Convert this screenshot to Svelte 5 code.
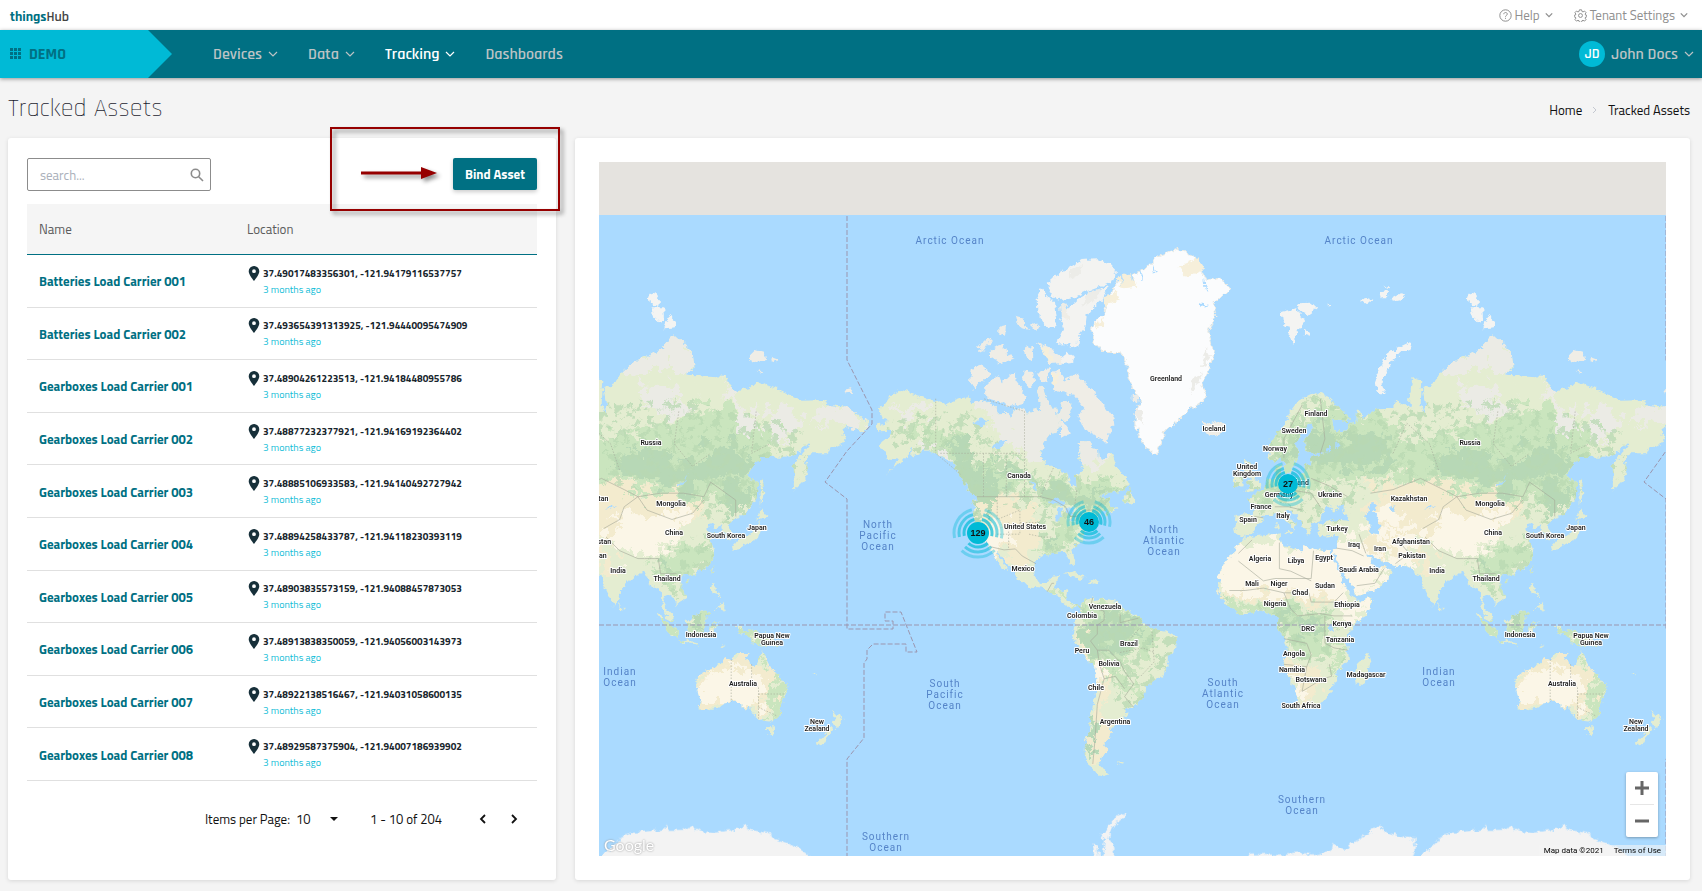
<script lang="ts">
  const WORLD = 819;

  const assets = [
    ['Batteries Load Carrier 001', '37.49017483356301, -121.94179116537757'],
    ['Batteries Load Carrier 002', '37.493654391313925, -121.94440095474909'],
    ['Gearboxes Load Carrier 001', '37.48904261223513, -121.94184480955786'],
    ['Gearboxes Load Carrier 002', '37.48877232377921, -121.94169192364402'],
    ['Gearboxes Load Carrier 003', '37.48885106933583, -121.94140492727942'],
    ['Gearboxes Load Carrier 004', '37.48894258433787, -121.94118230393119'],
    ['Gearboxes Load Carrier 005', '37.48903835573159, -121.94088457873053'],
    ['Gearboxes Load Carrier 006', '37.48913838350059, -121.94056003143973'],
    ['Gearboxes Load Carrier 007', '37.48922138516467, -121.94031058600135'],
    ['Gearboxes Load Carrier 008', '37.48929587375904, -121.94007186939902'],
  ];

  let search = $state('');
  let perPage = $state('10');

  // web mercator, lon/lat pairs to map pixels
  function project(pair: string) {
    const [lon, lat] = pair.split(',').map(Number);
    const x = 248 + (lon + 180) * 2.2756;
    const y = 463 - 130.4 * Math.log(Math.tan(Math.PI / 4 + (lat * Math.PI) / 360));
    return `${x.toFixed(1)} ${y.toFixed(1)}`;
  }

  const line = (s: string) => 'M' + s.split(' ').map(project).join('L');
  const area = (s: string) => line(s) + 'Z';

  const coasts = [
    // north america
    '-168,65.6 -162,66.2 -164,66.6 -166,68.3 -163,69.3 -161,70.4 -156.6,71.3 -152,70.9 -146,70.2 -141,69.6 -136,69 -133,69.6 -129,70.1 -127,70.2 -125,69.5 -121,69.8 -116,69 -114,68.2 -115,67.8 -109,67.9 -108,66.8 -106,68.7 -101,67.8 -98,67.8 -97.5,68.5 -95,68.2 -95.5,69.8 -96.5,71.2 -94.5,72 -92.5,71.2 -91.5,69.6 -90,68.6 -88,68.6 -87.5,67.3 -86.5,67.4 -85.5,69.5 -82.5,69.7 -81.3,68.8 -82,68 -81.3,67.2 -84,66.4 -86.7,66.4 -86,65.8 -88,64.2 -90.5,64 -93,62.5 -94.3,60.5 -94.8,58.8 -92.8,58.5 -92.5,57 -90,57.2 -85,55.3 -82.3,55.1 -82.3,53 -81,51.9 -79,51.3 -79.5,54.7 -77,55.8 -76.5,57.5 -78.5,58.9 -77.3,60 -78.2,62.4 -74,62.3 -71.5,61.3 -69.7,61 -69.5,59 -67.8,58.4 -66,58.9 -64.6,60.3 -62.5,58.2 -61.5,56.5 -58,54.8 -55.8,53 -57,51.5 -60,50.2 -66.5,50.2 -69.5,48.2 -65,49.2 -64.5,48 -65,46.8 -64,46 -61,45.3 -64,44.3 -66,43.6 -65.5,45.3 -67,44.8 -70,43.8 -70.8,42.5 -70,41.7 -74,40.6 -74.2,39.5 -75.5,38 -76.3,36.9 -75.6,35.2 -78,33.9 -81,32 -81.4,30.5 -80.1,27 -80.4,25.3 -81.8,26 -82.8,28 -84,30 -86,30.3 -89.5,30.2 -90,29.1 -94,29.6 -97.2,27.8 -97.7,24 -97.6,22 -96.3,19.2 -94.5,18.2 -92,18.6 -90.7,19.5 -90.3,21 -87,21.5 -87.5,19 -88.3,17 -88.8,15.9 -83.2,15 -83.7,11.5 -81.8,9 -79.5,9.5 -77.3,8.6 -77.8,7.3 -78.5,8.8 -80.3,7.4 -82.8,8.2 -85.7,10 -87.5,12.9 -91.5,14 -94.5,16.2 -99,16.6 -105,19.5 -105.5,21.8 -108.8,25.5 -112.5,29.5 -114.7,31.7 -113,28.5 -110.3,25 -109.5,23 -112,24.7 -114.7,27.8 -115.8,30 -117.2,32.6 -118.5,34 -120.6,34.6 -122.3,37 -124.3,40.3 -124,44 -124.6,48.3 -122.5,47.5 -123,49.2 -127,51 -130,54.5 -133.5,58 -137,58.8 -140,59.8 -146,60.7 -148,60 -151.5,59.2 -151,61 -154,59.3 -158,57 -163,55 -164.5,54.6 -160,56 -157.5,58.6 -162,58.8 -165,61 -166,62 -161,63.7 -161,64.6 -166,64.5',
    // south america
    '-77.3,8.6 -75.5,10.6 -71.7,12.4 -71.5,10.8 -68,11.5 -62,10.7 -60,8.5 -57,6 -51.5,4.3 -50,0.5 -48,-0.7 -44,-2.5 -40,-2.9 -35.3,-5.3 -34.8,-8 -37,-11.5 -39,-14 -39.2,-18 -41,-22 -44.5,-23 -48.5,-26 -48.8,-28.5 -52,-32.5 -54.5,-34.8 -58,-34 -57,-36.5 -58.5,-38.5 -62.2,-39 -62.3,-41 -65,-41 -64,-42.6 -65.5,-45 -67.5,-46.2 -65.8,-47.8 -69,-51 -68.4,-52.4 -65.2,-54.7 -69,-55.3 -73,-53 -75.5,-50.5 -75.5,-47 -73.5,-42 -73.6,-38 -71.5,-32 -70.5,-25 -70.3,-18.3 -75.5,-15 -78.5,-9 -81.2,-5 -80,-3 -80.8,-1 -80,1 -77.8,2.5 -77.3,5 -77.8,7.3',
    // eurasia
    '25.7,71 31,70.3 41,67 40,66.2 33,66.6 35,64.3 40,64.7 39.5,65.8 44,66 44,68.4 46,68 46.5,66.8 54,68.5 60,68.6 61,69.8 66,69 69,68.5 67,69.7 68.5,72.9 72.8,72.5 72,69 73.5,67.5 74,69 73,71.4 78,72.3 81,73.5 87,75 98,76.2 104,77.7 112,76 113,74 109,73.3 118,73.2 127,73 130,71 137,71.5 140,72.5 150,71.3 160,69.7 170,69.8 171,69 180,68.8 190,66 187.5,64.5 180,65.3 177.5,64.7 179.5,62.5 170,60 163.5,60 162,57.8 163,56 160,53 156.7,51 156,57 163.5,61.8 164,62.5 160,60.7 155,59.3 142,59.2 135.5,54.7 141,53 140,48.5 135.5,44 130.7,42.3 127.5,40 129.5,37 128.5,35 126.5,34.5 126.5,37.5 125,38 124.5,40 121.5,39 121.8,40.8 118,39 119,37.3 122.5,37 119.3,35 122,31.5 121.5,28.5 118,24.5 113.5,22.2 110,21 108,21.5 106,19 109,13 109,11.5 105,8.6 105,10.5 102,12.5 100.8,13.5 99.2,10 100.5,7.3 103.5,4 104,1.4 101,2.8 98.3,8 98.7,12 97.5,16.5 94.3,16 92,21 90.5,22.5 87,21.5 85,19.7 80.2,15.5 80,12 77.5,8 76,11 73,17 72.7,21 69,22.3 67,25 61.5,25.2 57,26.8 53,27 50,30 48,30 50.5,26.5 51.5,25.5 51.5,24.3 54,24.2 56.3,26.2 56.7,24.3 59.8,22.5 57.5,19 55,17 52,15.5 45,12.8 43.3,12.7 42.5,16.5 39,21.5 37,25 34.7,28 35,29.5 32.5,30 34.3,31.3 36,35 36,36.8 30.5,36.6 27.5,36.8 26.5,39.5 29,41 35,42 41.5,41.5 38,44.5 39,47.2 35,46.3 36.5,45.3 33.5,44.5 33,46 30.5,46.3 28.5,43.5 28,41.5 26,40.8 23.5,40.2 24,37.8 22.8,36.5 19.5,41.5 14,45 12.3,45.3 13.5,43.6 18.4,40 17,39 16,38 15.5,40 12,42 8.8,44.4 6,43.1 3,43.2 3,41.8 -0.2,39.5 -2,36.8 -5.5,36 -8.9,37 -9.4,38.8 -8.8,43.2 -1.7,43.4 -1.2,46 -4.7,48.4 -1.5,48.7 -1.5,49.6 3,51.2 5,53.3 8.5,53.8 8.2,57 10.6,57.7 10.8,54.2 14,54 19,54.4 21,55.5 21.3,57.6 23.5,57.1 24,59.2 30,59.9 25,60.2 22.5,60 21.3,61 21.5,63 25.3,65 24.5,65.8 22,65.7 17.3,62 18.8,60 16.5,57.5 14.3,55.4 12.8,55.5 10.8,59.2 8,58 5.3,59 5,62 12,65.5 14.5,68 19,69.9',
    // africa
    '-5.8,35.8 10,37.3 11,33.8 15.3,32.3 20,31 20,32.8 25,31.6 32.3,31.2 32.5,29.8 35.5,24 37.3,21 37.3,18.8 39.5,15.3 43.2,11.8 44.5,10.5 51.2,11.9 48,4.5 42,-1.5 39.3,-5 40.6,-15 35,-20 35.4,-24 32.7,-26 32.5,-28.5 28,-33 22,-34.1 18.5,-34.2 17,-29 14.5,-22.5 11.8,-17 13.7,-11 12,-5 9,-1 9.6,3.8 5.5,4.4 2,6.3 -3,5 -7.5,4.4 -13,8.8 -17.4,14.7 -16.2,19 -17,21 -13,27.7 -9.8,30 -9.7,32 -6.8,34',
    // australia, tasmania, new zealand
    '114,-22 117,-20.7 122,-18 124,-16.2 127,-14 129.5,-15 131,-12.2 136.8,-12.2 135.5,-15 140,-17.7 141.6,-14 142.5,-10.8 144,-14.5 146.2,-18.8 149,-20.5 153,-25 153.5,-28.5 151,-33.5 150,-37.3 146.3,-39 143.5,-38.7 140,-37.8 138,-35.5 137.8,-33 135.5,-34.8 131.2,-31.5 126,-32.2 123.5,-34 118,-35 115,-34.3 115.8,-32 113.7,-26',
    '144.7,-40.8 148.3,-41 147.8,-43.2 146,-43.5',
    '172.7,-34.5 175.5,-36.8 178.4,-37.8 177,-39.5 175.2,-41.6 173.8,-39.3 174.7,-37.5',
    '172.7,-40.6 174.2,-41.8 171,-44.5 170.5,-46 168.3,-46.6 166.6,-45.9 170.5,-43',
    // islands
    '-5.5,50.1 1.3,51.2 1.6,52.8 -1.5,55 -2,57.6 -5,58.6 -6,56.5 -3,54 -4.8,53 -3,51.5',
    '-10,52 -6.2,52.2 -6,54.5 -8,55.3 -10,54',
    '49.3,-12.2 50.4,-15.8 47.2,-25 44,-25 43.5,-22 44.5,-16.5',
    '95.4,5.6 98,4.2 103.5,-1 106,-3.2 105.8,-5.8 102,-4 98.7,1.6',
    '105.3,-6.7 108.5,-6.7 114.3,-7.7 114.3,-8.6 108,-7.8',
    '109,1.5 111.5,2.5 116.5,6.9 119,5.2 117.5,1 116,-4 110.2,-2.8',
    '119.5,-5.4 119,-3 120,0.8 125,1.5 120.5,0.2 123.3,-0.8 121.5,-1.8 122.7,-4.7 120.8,-2.8',
    '131,-0.8 134,-0.8 135,-3.2 138,-1.7 144,-4 147.5,-6 150.5,-10.5 146.5,-9 143,-9 138,-8.3 137.8,-5.2 132.8,-4',
    '120.3,16 120.8,18.6 122.2,18.3 121.6,16 124,13 120.8,13.8', '122,7 125.5,9.7 126.5,7.5 125.5,5.8 124,7.5',
    '130.3,31.5 131.8,31.5 135.8,33.5 140.8,35.7 142,39.5 141.3,41.4 140,39.5 137,36.8 131,34.4 129.8,33',
    '140,42 143.3,42 145.5,43.4 141.8,45.5 141.3,43.2', '142,46 143.5,49.3 143,54 142,53 142,49',
    '120.2,23 121.6,25.2 120.8,22', '108.7,19.2 110.8,20 109.5,18.3', '79.8,9.6 81.8,7.3 80.2,6',
    '-84.8,21.8 -80.5,23 -74.2,20.2 -77.5,19.9', '-74.4,18.4 -72.5,19.9 -68.4,18.6 -71.5,17.8',
    '-59.3,47.7 -55.5,51.5 -55.5,50 -52.8,47.5 -55.5,47', '12.5,38.1 15.5,38.2 15,36.8', '8.3,39 9.7,39.2 9.2,41.2 8.3,41',
    '164,-20.2 167,-22.3 165,-21.5', '124,-9.5 127,-8.6 124,-10.2', '-61,-51.6 -58,-51.6 -59.5,-52.2',
  ].map(area).join('');

  const greenland = area('-73,78.2 -71,77.5 -72,77 -68,76 -60,76 -57,74.5 -56,73 -54.5,71.5 -51,69.8 -53.5,67.5 -53.5,66 -51,63 -48,60.9 -44,59.9 -42.5,61.5 -40,64.8 -35,66.2 -30,68.1 -24,69.5 -22,70.5 -24,72 -21,74 -19,76 -21,78 -18,79.5 -19,80.3 -12,81.3 -16,82 -22,81.8 -27,83.2 -35,83.6 -44,83.2 -50,82.4 -60,82 -65,80.8 -67,79.6');

  const lakes = [
    '50,46.8 53,46.8 53,45 51,44.5 54,42 53.8,37 50,37.5 49.5,40.5 47.5,43',
    '-92,46.8 -88,48.8 -84.6,47.5 -85,46.6 -88,46.8', '-88,42 -87.7,45.5 -85,45.8 -86.3,42', '-84,46 -80,45.5 -82,43.2 -83.8,44',
    '-83,41.6 -79,42.8 -80,42.2', '-79.5,43.3 -76.3,44 -76.5,43.4', '-99,53.8 -97,52 -96.5,50.5 -98.5,52',
    '-124,66 -121,67 -118,66.5 -121,65.2', '-117,61.2 -112,62.6 -109.5,62.8 -113,61', '104,51.6 108,53.2 110,55.7 108,52.4',
    '31.8,0.4 34,0.3 33.5,-2.5 31.8,-2.3', '30,60.2 32.8,60.3 31.5,61.6', '35,61 36.5,61.5 35,62.6', '58.5,46 61,46.5 60,44', '74,45 79,46.5 76,46.3',
  ].map(area).join('');

  const FOREST = '#b7d8b6';
  const GREEN = '#cae5be';
  const SAND = '#f3ebce';
  const DESERT = '#fbf6e7';
  const TUNDRA = '#ebebe5';

  const terrain = [
    [TUNDRA, '-128,71 -96,74 -80,71 -60,64 -66,58 -78,57 -84,62 -94,58 -103,60 -112,64'],
    [TUNDRA, '-150,60 -141,62 -134,60 -139,58 -146,60'],
    [TUNDRA, '-160,69 -146,69 -142,67.5 -155,67'],
    [GREEN, '-158,64 -142,66 -130,64 -124,58 -110,58 -96,54 -80,53 -64,53 -58,48 -72,43 -90,46 -105,52 -125,48 -134,57 -142,62'],
    [FOREST, '-136,63 -128,62 -120,56 -112,50 -114,46 -120,41 -125,41 -126,50 -131,55'],
    [FOREST, '-120,58 -108,57 -96,53 -84,52 -78,50 -66,51 -60,49 -68,46 -80,46 -92,48 -97,51 -108,54'],
    [SAND, '-122,46 -108,49 -99,47 -97,35 -100,22 -106,24 -110,30 -116,32 -120,36'],
    [DESERT, '-118,42 -110,42 -106,34 -114,32 -118,36'],
    [GREEN, '-94,36 -84,41 -74,44 -70,46 -77,38 -82,33 -88,30 -95,30'],
    [FOREST, '-93,36 -90,37 -88,33 -93,31'],
    [GREEN, '-90,18 -84,15 -83,9 -78,9 -88,14'],
    [GREEN, '-79,9 -72,10 -60,8 -50,2 -44,-3 -48,-10 -60,-18 -56,-24 -50,-28 -56,-30 -66,-22 -70,-14 -80,-6'],
    [FOREST, '-77,2 -70,3 -62,5 -52,3 -49,-2 -54,-9 -60,-12 -68,-12 -74,-10 -78,-4'],
    [SAND, '-82,-4 -78,-5 -74,-12 -68,-16 -64,-26 -66,-36 -63,-42 -67,-53 -72,-50 -71,-36 -71,-18 -77,-14'],
    [DESERT, '-76,-14 -70,-14 -66,-20 -69,-30 -72,-30 -71,-18'],
    [FOREST, '-75,-38 -72,-38 -72,-46 -73,-52 -76,-50'],
    [GREEN, '5,60 14,66 30,69 60,67 64,62 100,66 120,70 150,64 142,54 134,44 120,48 96,50 60,54 30,52 5,48 -3,44'],
    [FOREST, '22,64 34,67 38,62 48,65 58,63 62,58 52,57 40,57 30,57 22,60'],
    [FOREST, '14,63 20,64 17,58 13,56 10,58'],
    [FOREST, '88,62 100,60 108,57 120,61 130,62 140,58 132,55 118,54 110,50 98,52 86,53 78,57 84,60'],
    [FOREST, '128,52 138,53 136,46 130,43 126,47'],
    [TUNDRA, '80,74 98,79 116,77 112,74 96,74 86,73'],
    [TUNDRA, '90,72 104,72 112,70 100,67 92,68'],
    [TUNDRA, '126,73 134,70 142,64 134,64 130,68'],
    [TUNDRA, '146,70 158,67 154,62 144,66'],
    [TUNDRA, '170,69 184,68 190,66 178,65 166,66'],
    [SAND, '46,50 58,52 74,54 90,50 104,50 116,48 116,43 104,36 80,34 62,35 52,38 46,44'],
    [DESERT, '54,46 62,46 68,42 62,38 54,40'],
    [DESERT, '74,42 88,44 104,44 112,42 106,38 102,33 92,29 82,30 74,36'],
    [GREEN, '104,33 112,32 120,32 122,26 112,20 108,14 98,18 94,26 100,28'],
    [FOREST, '96,29 101,29 100,25 95,26'],
    [SAND, '68,30 76,30 78,22 72,21'],
    [DESERT, '34,34 44,38 56,38 68,36 72,28 66,24 58,26 60,20 50,12 42,11 36,22 34,29'],
    [SAND, '44,36 50,38 62,32 58,26 50,30'],
    [DESERT, '-18,36 -4,33 10,35 34,33 37,20 42,12 34,10 20,12 0,13 -18,13'],
    [SAND, '-18,13 0,14 20,13 36,12 34,9 20,10 0,11 -14,11'],
    [GREEN, '-15,11 -6,9 8,9 26,8 33,4 31,-4 34,-14 26,-14 12,-13 8,2 -4,4 -12,5'],
    [FOREST, '9,4 18,5 27,3 28,-1 22,-4 13,-3 8,0'],
    [DESERT, '44,11 52,12 48,3 42,-1 38,4 43,7'],
    [SAND, '12,-17 22,-18 28,-24 26,-31 18,-35 14,-24'],
    [DESERT, '12,-19 17,-22 22,-28 18,-33 14,-26'],
    [GREEN, '35,-10 41,-11 38,-18 34,-18'],
    [GREEN, '95,6 104,2 110,2 117,8 120,0 130,1 152,-6 150,-12 137,-9 128,-3 112,-5 104,-7'],
    [FOREST, '110,2 116,4 116,-2 111,-1'],
    [SAND, '112,-20 124,-15 136,-10 147,-20 152,-28 144,-36 134,-36 116,-36 112,-28'],
    [DESERT, '112,-24 120,-20 134,-18 143,-23 146,-30 142,-34 130,-32 116,-32'],
    [GREEN, '143,-10 148,-19 155,-28 150,-39 143,-39 148,-34 149,-26 144,-18'],
  ];

  // scattered woodland over the larger zones
  const woodland = [
    '-164,66 -142,68 -126,68 -112,62 -96,57 -80,55 -56,55 -52,47 -70,43 -76,36 -82,30 -94,31 -98,45 -112,46 -122,38 -126,48 -136,60 -158,60',
    '-80,10 -60,8 -34,-5 -40,-22 -54,-34 -62,-34 -64,-18 -78,-8',
    '-10,44 -10,60 6,64 26,71 60,68 80,70 110,70 130,68 160,66 164,56 142,46 128,40 112,44 112,50 90,51 60,54 46,48 40,42 20,38',
    '100,34 122,38 122,24 110,8 96,18 92,27', '-16,12 30,8 36,0 38,-16 24,-16 10,-12 6,4',
  ].map(area).join('');

  const borders = [
    '-123,49 -95,49 -89,48 -84,46 -82,43 -79,43 -75,45 -71,45 -68,47',
    '-117,32.5 -111,31.3 -106,31.7 -103,29 -99,27 -97,26',
    '-92,14.5 -90,18 -89,18', '-72,12 -73,8 -67,6 -67,2 -70,0 -70,-4 -73,-7 -70,-11 -69,-17 -67,-23 -70,-33 -71,-45 -72,-52',
    '-60,5 -60,1 -52,3', '-70,-11 -65,-11 -60,-16 -58,-20 -54,-25 -58,-30 -54,-34', '-67,-23 -62,-22 -58,-27',
    '-8,30 -2,35', '-8,27 3,19 8,20 24,20 25,31', '10,34 10,24 15,23 24,19', '-12,15 -5,15 3,16 12,14 23,14 24,10 34,10 38,14',
    '12,14 15,7 18,4 28,5 34,4 42,4', '30,4 30,-8 34,-10 40,-11', '12,-6 22,-8 24,-13 22,-18 12,-17', '22,-18 20,-28 29,-23 33,-22 32,-17',
    '50,50 60,51 72,54 82,51 88,49 98,50 108,50 117,49 120,53 131,48 131,43', '88,49 92,45 103,42 112,44 117,48',
    '73,39 80,42 82,46 88,49', '74,36 80,31 88,28 97,28 98,22 105,22', '62,35 67,30 61,26', '45,37 48,30', '35,32 42,31 47,29', '44,17 52,18 56,24',
    '28,70 30,63 28,60', '20,69 12,63 12,59', '24,54 32,52 40,49', '6,50 14,51 24,50 28,46', '-1,43 3,42.5', '8,46 14,46 20,45',
  ].map(line).join('');

  const provinces = [
    '-141,70 -141,60 -130,55', '-139,60 -102,60', '-102,49 -102,68 -120,70', '-110,49 -110,60', '-120,49 -120,60', '-95,49 -89,57',
    '-80,46 -79,51', '-114,49 -114,42 -104,45 -104,37 -114,37', '-104,41 -95,41', '-109,41 -109,32', '-100,37 -94,36 -90,36',
    '129,-15 129,-32', '138,-17 138,-26 141,-26 141,-38', '141,-29 153,-29', '141,-34 149,-37', '-60,-12 -50,-10 -45,-12', '-52,-2 -58,-9', '-46,-3 -45,-16 -51,-22',
    '106,68 104,62 112,57 120,60', '140,68 138,60 146,62', '60,60 66,66 76,62 80,56',
  ].map(line).join('');

  // [x, centre y, lines of text]
  const places: [number, number, ...string[]][] = [
    [717, 252, 'Finland'], [695, 269, 'Sweden'], [676, 287, 'Norway'], [615, 267, 'Iceland'], [648, 308, 'United', 'Kingdom'],
    [680, 333, 'Germany'], [699, 321, 'Poland'], [731, 333, 'Ukraine'], [662, 345, 'France'], [684, 354, 'Italy'], [649, 358, 'Spain'],
    [738, 367, 'Turkey'], [810, 337, 'Kazakhstan'], [891, 342, 'Mongolia'], [871, 281, 'Russia'], [894, 371, 'China'],
    [946, 374, 'South Korea'], [977, 366, 'Japan'], [812, 380, 'Afghanistan'], [755, 383, 'Iraq'], [781, 387, 'Iran'],
    [813, 394, 'Pakistan'], [838, 409, 'India'], [887, 417, 'Thailand'], [661, 397, 'Algeria'], [697, 399, 'Libya'],
    [725, 396, 'Egypt'], [760, 408, 'Saudi Arabia'], [653, 422, 'Mali'], [680, 422, 'Niger'], [701, 431, 'Chad'], [726, 424, 'Sudan'],
    [676, 442, 'Nigeria'], [748, 443, 'Ethiopia'], [709, 467, 'DRC'], [743, 462, 'Kenya'], [741, 478, 'Tanzania'], [695, 492, 'Angola'],
    [693, 508, 'Namibia'], [712, 518, 'Botswana'], [767, 513, 'Madagascar'], [702, 544, 'South Africa'], [921, 473, 'Indonesia'],
    [992, 477, 'Papua New', 'Guinea'], [963, 522, 'Australia'], [1037, 563, 'New', 'Zealand'], [567, 217, 'Greenland'],
    [420, 314, 'Canada'], [426, 365, 'United States'], [424, 407, 'Mexico'], [506, 445, 'Venezuela'], [483, 454, 'Colombia'],
    [483, 489, 'Peru'], [530, 482, 'Brazil'], [510, 502, 'Bolivia'], [497, 526, 'Chile'], [516, 560, 'Argentina'],
  ];

  const oceans: [number, number, ...string[]][] = [
    [351, 78, 'Arctic Ocean'], [760, 78, 'Arctic Ocean'], [279, 373, 'North', 'Pacific', 'Ocean'], [346, 532, 'South', 'Pacific', 'Ocean'],
    [565, 378, 'North', 'Atlantic', 'Ocean'], [624, 531, 'South', 'Atlantic', 'Ocean'], [21, 514, 'Indian', 'Ocean'],
    [840, 514, 'Indian', 'Ocean'], [287, 679, 'Southern', 'Ocean'], [703, 642, 'Southern', 'Ocean'],
  ];

  const labels = [...places, ...places.filter(([x]) => x > 800).map(([x, ...rest]) => [x - WORLD, ...rest] as typeof places[0])];

  const clusters = [
    { x: 379, y: 371, count: 129, core: 11, rings: [14, 19, 24] },
    { x: 490, y: 360, count: 46, core: 10, rings: [12, 16, 21] },
    { x: 689, y: 322, count: 27, core: 10, rings: [12, 16, 21] },
  ];

  function arcs(r: number) {
    return [105, 227, 347]
      .map((start) => {
        const [a, b] = [start, start + 87].map((d) => (d * Math.PI) / 180);
        return `M${r * Math.cos(a)} ${-r * Math.sin(a)}A${r} ${r} 0 0 0 ${r * Math.cos(b)} ${-r * Math.sin(b)}`;
      })
      .join('');
  }
</script>

{#snippet chevron(size: number)}
  <svg class="chevron" width={size} height={size} viewBox="0 0 10 10" aria-hidden="true"><path d="M1 3l4 4 4-4" /></svg>
{/snippet}

<div class="page">
  <div class="topbar">
    <a class="logo" href="#home">things<span>Hub</span></a>
    <div class="topbar-menu">
      <button>
        <svg width="13" height="13" viewBox="0 0 13 13" aria-hidden="true">
          <circle cx="6.5" cy="6.5" r="5.7" />
          <path d="M4.8 5.2c0-2.3 3.5-2.2 3.5-.1 0 1.3-1.8 1.3-1.8 2.6M6.5 8.8v1" />
        </svg>
        Help {@render chevron(8)}
      </button>
      <button>
        <svg width="13" height="13" viewBox="0 0 24 24" stroke-width="1.8" aria-hidden="true">
          <circle cx="12" cy="12" r="3.6" />
          <path d="M10 1.5h4l.7 3 2 .9 2.700-1.600 2.800 2.800-1.600 2.700.8 2 3 .7v0l-.1 2.200-2.900.7-.8 2 1.600 2.700-2.800 2.800-2.700-1.600-2 .8-.7 3h-4l-.7-3-2-.8-2.700 1.600-2.800-2.800 1.600-2.700-.8-2-3-.7v-2.200l3-.7.8-2-1.600-2.700 2.800-2.800 2.700 1.600 2-.9z" />
        </svg>
        Tenant Settings {@render chevron(8)}
      </button>
    </div>
  </div>

  <header>
    <a class="tenant" href="#tenant">
      <svg width="12" height="12" viewBox="0 0 12 12" aria-hidden="true">
        {#each [0, 4, 8] as x}
          {#each [0, 4, 8] as y}
            <rect {x} {y} width="3" height="3" />
          {/each}
        {/each}
      </svg>
      DEMO
    </a>
    <nav>
      <button>Devices {@render chevron(10)}</button>
      <button>Data {@render chevron(10)}</button>
      <button class="active">Tracking {@render chevron(10)}</button>
      <a href="#dashboards">Dashboards</a>
    </nav>
    <button class="user"><span class="avatar">JD</span>John Docs {@render chevron(10)}</button>
  </header>

  <div class="title-row">
    <h1>Tracked Assets</h1>
    <div class="breadcrumb">
      <a href="#home">Home</a>
      <svg width="6" height="8" viewBox="0 0 6 8" aria-hidden="true"><path d="M1 1l3 3-3 3" /></svg>
      <a href="#assets">Tracked Assets</a>
    </div>
  </div>

  <main>
    <section class="card list">
      <div class="toolbar">
        <label class="search">
          <input type="text" placeholder="search..." aria-label="search" bind:value={search} />
          <svg width="14" height="14" viewBox="0 0 14 14" aria-hidden="true"><circle cx="5.500" cy="5.500" r="4.200" /><path d="M8.700 8.700l4.300 4.300" /></svg>
        </label>
        <div class="action">
          <button class="bind">Bind Asset</button>
          <div class="callout">
            <svg width="80" height="20" viewBox="0 0 80 20" aria-hidden="true"><path d="M1 8.500h60V4l16 6-16 6v-4.500H1z" /></svg>
          </div>
        </div>
      </div>

      <table>
        <thead>
          <tr><th>Name</th><th>Location</th></tr>
        </thead>
        <tbody>
          {#each assets as [name, position]}
            <tr>
              <td><a href="#asset">{name}</a></td>
              <td>
                <div class="location">
                  <svg width="12" height="15" viewBox="0 0 12 15" aria-hidden="true">
                    <path fill-rule="evenodd" d="M6 0a5.300 5.300 0 0 0-5.300 5.300C.7 9 6 15 6 15s5.300-6 5.300-9.700A5.300 5.300 0 0 0 6 0zm0 3.300a1.900 1.900 0 1 1 0 3.800 1.900 1.900 0 0 1 0-3.800z" />
                  </svg>
                  <div>
                    <strong>{position}</strong>
                    <span>3 months ago</span>
                  </div>
                </div>
              </td>
            </tr>
          {/each}
        </tbody>
      </table>

      <div class="pager">
        <label for="per-page">Items per Page:</label>
        <div class="select">
          <select id="per-page" bind:value={perPage}>
            <option>10</option>
            <option>25</option>
            <option>50</option>
          </select>
          <svg width="8" height="4" viewBox="0 0 8 4" aria-hidden="true"><path d="M0 0h8L4 4z" /></svg>
        </div>
        <span class="range">1 - 10 of 204</span>
        <button aria-label="Previous page"><svg width="7" height="10" viewBox="0 0 7 10"><path d="M6 1L2 5l4 4" /></svg></button>
        <button aria-label="Next page"><svg width="7" height="10" viewBox="0 0 7 10"><path d="M1 1l4 4-4 4" /></svg></button>
      </div>
    </section>

    <section class="card">
      <div class="map">
        <svg class="world" viewBox="0 0 1067 694" preserveAspectRatio="xMidYMid slice">
          <defs>
            <clipPath id="land-clip"><path d={coasts} /></clipPath>
            <filter id="rough-coast" filterUnits="userSpaceOnUse" x="200" y="0" width="960" height="694">
              <feTurbulence type="fractalNoise" baseFrequency="0.18" numOctaves="3" seed="4" />
              <feDisplacementMap in="SourceGraphic" scale="7" xChannelSelector="R" yChannelSelector="G" />
            </filter>
            <filter id="rough-terrain" filterUnits="userSpaceOnUse" x="200" y="0" width="960" height="694">
              <feTurbulence type="fractalNoise" baseFrequency="0.07" numOctaves="4" seed="9" />
              <feDisplacementMap in="SourceGraphic" scale="44" xChannelSelector="R" yChannelSelector="G" />
            </filter>
            <filter id="speckle" filterUnits="userSpaceOnUse" x="200" y="0" width="960" height="694">
              <feTurbulence type="fractalNoise" baseFrequency="0.12" numOctaves="4" seed="21" />
              <feColorMatrix values="0 0 0 0 0  0 0 0 0 0  0 0 0 0 0  14 0 0 0 -7.600" />
              <feComposite in="SourceGraphic" operator="in" />
            </filter>
            <g id="world">
              <g filter="url(#rough-coast)">
                <path d={coasts} fill="#e4edd1" />
                <g clip-path="url(#land-clip)">
                  <g filter="url(#rough-terrain)">
                    {#each terrain as [fill, shape]}
                      <path d={area(shape)} {fill} />
                    {/each}
                  </g>
                  <path d={woodland} fill="#b9d9b2" opacity="0.75" filter="url(#speckle)" />
                </g>
                <path d={lakes} fill="#aadaff" />
                <path d={greenland} fill="#fbfcfd" stroke="#ecebe4" />
                <!-- canadian arctic -->
                <g transform="translate(361 58) scale(.3333)" fill="#efede6">
                  <path fill="#f3f3f1" d="M262 190L290 165 330 140 365 120 410 118 445 130 468 155 455 185 420 200 380 215 340 235 300 240 275 230zM325 262L360 235 400 215 445 198 430 235 400 262 380 290 375 325 355 350 352 385 320 372 285 375 300 350 312 325 300 290z" />
                  <path fill="#f3f3f1" d="M245 205L262 225 285 250 290 290 285 320 262 325 232 275 230 235zM300 415L320 398 342 410 335 430 305 432z" />
                  <path d="M300 250l20 8 8 40-25-5zM230 365l40 20 30 20 5 25-40 2-10-32zM195 375l23 10 2 30-15 5-15-25zM168 290l17 5 20 35-30-10zM50 385l35-35 12 5-27 40zM90 395l40-25 10 30 25 15-45 17-30-22zM217 305l21 15-8 15-12-7zM118 320l20-5-3 35-17-5z" />
                  <path d="M35 445l30-10 30 25-35 30-15 20-15-25zM75 500l40-35 10 25 25-25 15-10 7 35 23 30-5 30-40 10-30-15-40-10zM190 455l30 0 2 35-12 15-20-25zM238 450l30-5-6 45-22-5z" />
                  <path d="M275 455L300 450 310 480 345 460 365 480 400 510 425 545 465 600 450 635 440 672 405 645 370 625 355 590 370 560 340 525 280 510zM300 605l20 15 15 20-35 10z" />
                  <path fill="#f6efda" d="M405 315l30-22-8 25-22 8zM430 235l38-20 8 25-40 18zM655 140l60-25 20 35-55 20zM240 372l25 16 20 30-25 8zM278 460l20-4-4 40-15 5zM470 175l40-15 25 40-45 5z" />
                  <path fill="#ecece8" d="M740 385l10 20-10 30-18 10zM515 525l20 0-4 25-16-10zM525 570l20 0 5 45-18-15zM700 470l30-10-25 50-18 8zM330 150l40-15-10 25-30 15zM385 215l40-10-20 35-40 20z" />
                  <path fill="#efede6" d="M725 605l25 7 25-10 22 10-2 18-25 18-30-6z" />
                  <path fill="#aadaff" d="M482 150l8 40-5 2zM510 145l10 35-4 2zM535 140l14 35-5 2zM575 130l14 30-6 0zM730 170l12 50-8-10zM720 250l25 5-25 8z" />
                </g>
                <!-- svalbard to wrangel island -->
                <g transform="translate(601 58) scale(.3333)" fill="#f4f4f2">
                  <path d="M245 275l45-10 22 40-27 40-5 30-15-30 5-25-20-5zM292 250l43-2 18 17-28 20-25-10zM315 330l15 5 0 15-15-5zM480 240l15-10 23 10-18 15zM540 215l20-5 2 25-17 0zM575 235l25-15 15 2-10 18-25 5zM550 200l18-5 2 10zM385 252l10 0-4 6z" />
                  <path d="M522 495L540 450 555 410 590 385 625 368 637 372 630 390 600 400 575 425 555 465 545 490 557 520 540 520z" />
                  <path d="M803 235l17-25 15 25-3 23-24-6zM812 262l38 0 2 38-17 5-20-20zM850 325l15-37 20 17 0 17z" />
                  <path fill="#efede6" d="M1105 405l15-15 35 10 3 20-38 7-12-5zM1168 410l27 10-7 7-18-7zM1130 450l18 8-8 7zM1390 512l20-4 8 10-23 2z" />
                </g>
                <!-- antarctica -->
                <g transform="translate(601 338) scale(.3333)" fill="#f3f3f3">
                  <path d="M130 1080L150 1064 200 1062 240 1066 290 1060 340 1066 395 1050 400 1028 415 1045 440 1050 450 1030 510 1000 515 985 540 980 555 995 610 1012 647 1015 645 1045 638 1080z" />
                  <path d="M660 1080L680 1050 705 1035 720 1010 760 998 850 988 855 975 862 990 900 990 930 980 960 992 1010 998 1060 988 1085 985 1092 972 1100 988 1170 1000 1165 1010 1225 1032 1260 1050 1300 1080z" />
                  <path d="M-322 1035l12 0 10 45-15 0zM-295 1080l10-60-15-15 20-20 20-30 35-17 0 10-30 27-15 25-5 18 13 17 7 45z" />
                </g>
              </g>
              <path class="border" d={borders} />
              <path class="province" d={provinces} />
            </g>
          </defs>

          <rect width="1067" height="694" fill="#e5e3df" />
          <rect y="53" width="1067" height="641" fill="#aadaff" />
          {#each [0, -WORLD] as offset}
            <use href="#world" x={offset} />
          {/each}
          {#each [0, WORLD] as offset}
            <path
              class="dateline"
              transform="translate({offset} 0)"
              d="M248 54V198L273 248V262L248 289 226 320 248 337V467H294V459H286V450H302L318 490H307V482H274L268 488V497L265 501V576L248 597V694"
            />
          {/each}
          <path class="dateline" d="M0 463H1067" />

          {#each oceans as [x, y, ...lines]}
            {#each lines as text, i}
              <text class="ocean" {x} y={y + 4 + 11 * (i - (lines.length - 1) / 2)}>{text}</text>
            {/each}
          {/each}
          {#each labels as [x, y, ...lines]}
            {#each lines as text, i}
              <text class="place" {x} y={y + 2 + 7 * (i - (lines.length - 1) / 2)}>{text}</text>
            {/each}
          {/each}

          {#each clusters as { x, y, count, core, rings }}
            <g class="cluster" transform="translate({x} {y})">
              {#each rings as r, i}
                <path d={arcs(r)} opacity={0.7 - i * 0.17} />
              {/each}
              <circle r={core} />
              <text y="3">{count}</text>
            </g>
          {/each}
        </svg>

        <span class="google">Google</span>
        <div class="zoom">
          <button aria-label="Zoom in"><svg width="14" height="14" viewBox="0 0 14 14"><path d="M0 7h14M7 0v14" /></svg></button>
          <button aria-label="Zoom out"><svg width="14" height="14" viewBox="0 0 14 14"><path d="M0 7h14" /></svg></button>
        </div>
        <div class="credits"><span>Map data ©2021</span><a href="#terms">Terms of Use</a></div>
      </div>
    </section>
  </main>
</div>

<style>
  :global(body) {
    margin: 0;
    background: #f4f4f4;
  }

  .page {
    min-height: 100vh;
    display: flex;
    flex-direction: column;
    font-family: 'Titillium Web', Roboto, 'Liberation Sans', sans-serif;
    font-size: 13px;
    color: #111;
  }

  button,
  input,
  select {
    font: inherit;
    color: inherit;
    margin: 0;
    padding: 0;
    border: 0;
    background: none;
  }

  a {
    color: inherit;
    text-decoration: none;
  }

  svg {
    fill: none;
  }

  .chevron {
    stroke: currentColor;
    stroke-width: 1.2;
  }

  .topbar {
    height: 30px;
    padding: 0 14px 0 10px;
    background: white;
    display: flex;
    align-items: center;
    justify-content: space-between;
  }

  .logo {
    color: #007083;
    font-family: Rajdhani, 'Titillium Web', Roboto, sans-serif;
    font-size: 14px;
    font-weight: 700;
    padding-top: 4px;
  }

  .logo span {
    color: #444;
    font-weight: 600;
  }

  .topbar-menu {
    display: flex;
    gap: 21px;
    color: #8f8f8f;
  }

  .topbar-menu button {
    display: flex;
    align-items: center;
    gap: 3px;
  }

  .topbar-menu svg {
    stroke: currentColor;
  }

  .topbar-menu .chevron {
    stroke-width: 1.6;
    margin-left: 2px;
  }

  header {
    height: 48px;
    background: #007083;
    color: #bcc3c5;
    font-family: Rajdhani, 'Titillium Web', Roboto, sans-serif;
    font-size: 16px;
    font-weight: 600;
    display: flex;
    align-items: center;
    box-shadow: 0 1px 4px rgba(0, 0, 0, 0.4);
    position: relative;
  }

  .tenant {
    box-sizing: border-box;
    width: 172px;
    height: 48px;
    padding-left: 10px;
    display: flex;
    align-items: center;
    gap: 7px;
    background: #00bad6;
    color: #007083;
    font-weight: 700;
    clip-path: polygon(0 0, 148px 0, 100% 50%, 148px 100%, 0 100%);
  }

  .tenant svg {
    fill: #007083;
  }

  nav {
    flex: 1;
    display: flex;
    gap: 30px;
    padding-left: 41px;
  }

  nav button,
  .user {
    display: flex;
    align-items: center;
    gap: 6px;
  }

  nav .active {
    color: white;
  }

  .user {
    margin-right: 8px;
  }

  .avatar {
    width: 26px;
    height: 26px;
    border-radius: 50%;
    background: #00bad6;
    color: white;
    font-size: 14px;
    line-height: 26px;
    text-align: center;
  }

  .title-row {
    height: 60px;
    padding: 0 12px 0 8px;
    display: flex;
    align-items: center;
    justify-content: space-between;
  }

  h1 {
    margin: 0;
    font-family: Rajdhani, 'Titillium Web', Roboto, sans-serif;
    font-size: 26px;
    font-weight: 300;
    color: #1c2430;
  }

  .breadcrumb {
    display: flex;
    align-items: center;
    gap: 10px;
    padding-top: 4px;
  }

  .breadcrumb svg {
    stroke: #c4c8d0;
  }

  main {
    flex: 1;
    padding: 0 12px 11px 8px;
    display: grid;
    grid-template-columns: 548fr 1115fr;
    gap: 19px;
  }

  .card {
    background: white;
    border-radius: 3px;
    box-shadow: 0 1px 4px rgba(0, 0, 0, 0.12);
    padding: 24px;
    display: flex;
    flex-direction: column;
    min-width: 0;
  }

  .list {
    padding: 20px 19px;
  }

  .toolbar {
    display: flex;
    justify-content: space-between;
    margin-bottom: 13px;
  }

  .search {
    box-sizing: border-box;
    width: 184px;
    height: 33px;
    padding: 0 6px 0 12px;
    border: 1px solid #8c8c8c;
    border-radius: 2px;
    display: flex;
    align-items: center;
  }

  .search input {
    flex: 1;
    min-width: 0;
    outline: none;
  }

  .search input::placeholder {
    color: #aab0ba;
  }

  .search svg {
    stroke: #8c8c8c;
    stroke-width: 1.6;
  }

  .action {
    position: relative;
  }

  .bind {
    width: 84px;
    height: 32px;
    border-radius: 2px;
    background: #007083;
    color: white;
    font-weight: 700;
    box-shadow: 0 2px 4px rgba(0, 0, 0, 0.2);
  }

  .callout {
    box-sizing: border-box;
    position: absolute;
    top: -31px;
    right: -23px;
    width: 230px;
    height: 84px;
    padding: 34px 28px;
    border: 2px solid #960000;
    filter: drop-shadow(3px 3px 2px rgba(0, 0, 0, 0.45));
    pointer-events: none;
  }

  .callout svg {
    display: block;
    fill: #960000;
  }

  table {
    width: 100%;
    height: 577px;
    border-collapse: collapse;
    table-layout: fixed;
  }

  th {
    height: 50px;
    padding: 0 12px;
    background: #f5f5f5;
    border-bottom: 1px solid #007083;
    color: #5c5c5c;
    font-weight: 400;
    text-align: left;
  }

  th:first-child {
    width: 184px;
  }

  td {
    padding: 1px 12px 0;
    border-bottom: 1px solid #e0e0e0;
  }

  td a {
    color: #007083;
    font-weight: 700;
  }

  .location {
    display: flex;
    gap: 3px;
    padding: 1px 1px 0;
    font-size: 10px;
    line-height: 16px;
  }

  .location svg {
    fill: #17303a;
  }

  .location strong {
    display: block;
    color: #17252c;
  }

  .location span {
    display: block;
    color: #12bdd7;
  }

  .pager {
    display: flex;
    align-items: center;
    justify-content: flex-end;
    padding: 24px 11px 0;
  }

  .select {
    position: relative;
    display: flex;
    align-items: center;
    margin: 0 32px 0 6px;
  }

  .select select {
    width: 42px;
    height: 28px;
    appearance: none;
  }

  .select svg {
    position: absolute;
    right: 0;
    fill: #111;
    pointer-events: none;
  }

  .range {
    margin-right: 20px;
  }

  .pager button {
    width: 24px;
    height: 24px;
    margin-left: 8px;
  }

  .pager button svg {
    stroke: #111;
    stroke-width: 1.8;
  }

  .map {
    flex: 1;
    min-height: 400px;
    position: relative;
    overflow: hidden;
    font-family: Roboto, 'Liberation Sans', sans-serif;
  }

  .world {
    position: absolute;
    width: 100%;
    height: 100%;
  }

  .border {
    stroke: #a5a898;
    stroke-width: 0.6;
  }

  .province {
    stroke: #a5a898;
    stroke-width: 0.6;
    stroke-dasharray: 1.5 1.5;
  }

  .dateline {
    stroke: #9b95ae;
    stroke-dasharray: 5 2;
  }

  .world text {
    text-anchor: middle;
  }

  .ocean {
    fill: #5584c8;
    font-size: 10px;
    letter-spacing: 1px;
  }

  .place {
    fill: #222;
    font-size: 7px;
    font-weight: 600;
    stroke: white;
    stroke-width: 2px;
    stroke-linejoin: round;
    paint-order: stroke;
  }

  .cluster circle {
    fill: #00bad6;
  }

  .cluster path {
    stroke: #00bad6;
    stroke-width: 3;
  }

  .cluster text {
    fill: #111;
    font-family: 'Liberation Sans', Arial, sans-serif;
    font-size: 9px;
    font-weight: 700;
  }

  .google {
    position: absolute;
    left: 5px;
    bottom: 1px;
    font-family: Lato, sans-serif;
    font-size: 16px;
    line-height: 20px;
    color: white;
    text-shadow: 0 0 2px #8a8a8a;
  }

  .zoom {
    position: absolute;
    right: 8px;
    bottom: 19px;
    width: 32px;
    background: white;
    border-radius: 2px;
    box-shadow: 0 1px 3px rgba(0, 0, 0, 0.3);
    padding: 0 4px;
    box-sizing: border-box;
  }

  .zoom button {
    display: flex;
    align-items: center;
    justify-content: center;
    width: 24px;
    height: 32px;
  }

  .zoom button + button {
    border-top: 1px solid #e6e6e6;
    height: 33px;
  }

  .zoom svg {
    stroke: #666;
    stroke-width: 3;
  }

  .credits {
    position: absolute;
    right: 0;
    bottom: 0;
    display: flex;
    gap: 10px;
    padding: 0 5px;
    background: rgba(245, 245, 245, 0.6);
    color: #000;
    font-size: 8px;
    line-height: 11px;
  }
</style>
